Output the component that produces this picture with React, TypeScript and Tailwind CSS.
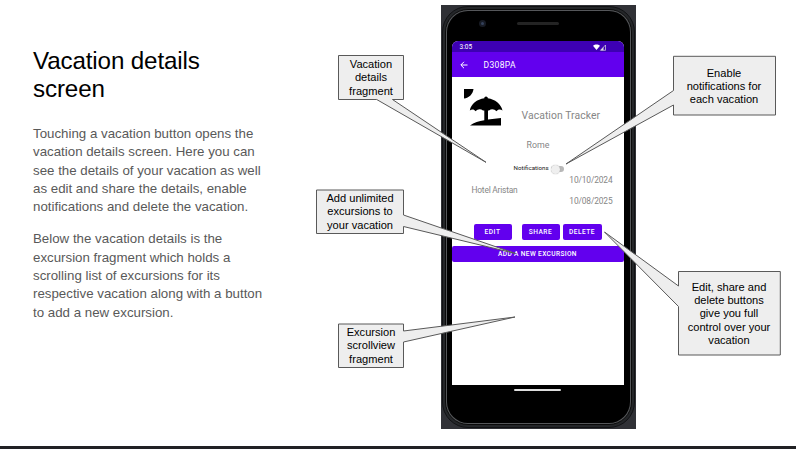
type Callout = { points: string; box: string; lines: string[] };

const callouts: Callout[] = [
  {
    points: "338.5,55.5 403.5,55.5 403.5,99.5 392.5,99.5 486,162.3 376.7,99.5 338.5,99.5",
    box: "left-[338px] top-[56px] w-[66px] h-[44px]",
    lines: ["Vacation", "details", "fragment"],
  },
  {
    points: "316.5,190 403.5,190 403.5,215 515.5,253.5 403.5,226.5 403.5,233.5 316.5,233.5",
    box: "left-[316px] top-[190px] w-[88px] h-[44px]",
    lines: ["Add unlimited", "excursions to", "your vacation"],
  },
  {
    points: "338.5,324 403.5,324 403.5,331 515,317 403.5,342 403.5,367.5 338.5,367.5",
    box: "left-[338px] top-[324px] w-[66px] h-[44px]",
    lines: ["Excursion", "scrollview", "fragment"],
  },
  {
    points: "673.5,56.3 775.5,56.3 775.5,115 673.5,115 673.5,105 566,164 673.5,90.5",
    box: "left-[673px] top-[57px] w-[102px] h-[59px]",
    lines: ["Enable", "notifications for", "each vacation"],
  },
  {
    points: "678.5,271.5 780.3,271.5 780.3,355 678.5,355 678.5,306.5 604.5,232 678.5,286",
    box: "left-[678px] top-[272px] w-[102px] h-[84px]",
    lines: ["Edit, share and", "delete buttons", "give you full", "control over your", "vacation"],
  },
];

function Copy() {
  return (
    <section className="w-[441px] shrink-0 whitespace-nowrap pl-[33px] pt-[47px]">
      <h1 className="text-[24.2px] leading-[28px] tracking-[-0.14px] text-black">
        Vacation details
        <br />
        screen
      </h1>
      <p className="mt-[22px] text-[13.3px] leading-[18.3px] text-[#595959]">
        Touching a vacation button opens the
        <br />
        vacation details screen. Here you can
        <br />
        see the details of your vacation as well
        <br />
        as edit and share the details, enable
        <br />
        notifications and delete the vacation.
      </p>
      <p className="mt-[14px] text-[13.3px] leading-[18.3px] text-[#595959]">
        Below the vacation details is the
        <br />
        excursion fragment which holds a
        <br />
        scrolling list of excursions for its
        <br />
        respective vacation along with a button
        <br />
        to add a new excursion.
      </p>
    </section>
  );
}

function BeachIcon() {
  return (
    <svg className="h-[38px] w-[40px]" viewBox="0 0 40 38">
      <path d="M0 0H9.5C9 5 5 9 0 9.5Z" />
      <path d="M22 7.5C23.2 7.5 23.8 8.3 23.8 9.3C31 10.3 37 15 38.5 21.5C36.5 20 34 20 32.5 22.3C30.5 20 27.5 19.3 25 21.5H24V30.6L37 29V36.5H6C10 33.5 15 32 20.3 31.2V21.5H19C16.5 19.3 13.5 20 11.5 22.3C10 20 8 20 5.8 21.5C7 15 13 10.3 20.3 9.3C20.3 8.3 21 7.5 22 7.5Z" />
    </svg>
  );
}

function StatusBar() {
  return (
    <div className="flex h-[11px] items-center bg-[#3d00b3] pl-[8px] pr-[17px] pt-[2px] text-[6.5px] text-white">
      <span>3:05</span>
      <svg className="ml-auto h-[7px] w-[14px]" viewBox="0 0 14 7">
        <path d="M0 1.8C2-.1 5-.1 7 1.8L3.5 6Z" fill="#fff" />
        <path d="M7.5 6.3L12.5 1V6.3Z" fill="none" stroke="#ddd" strokeWidth=".7" />
        <path d="M7.5 6.3L10.5 3V6.3Z" fill="#ddd" />
      </svg>
    </div>
  );
}

const buttonStyle = "flex h-4 items-center justify-center rounded-[2px] bg-[#6200ee] pt-[2px]";

function Screen() {
  return (
    <div className="mr-[2px] h-[344px] w-[172px] overflow-hidden rounded-t-[6px] bg-white font-['Roboto',sans-serif] text-[#868686]">
      <StatusBar />
      <div className="flex h-[25px] items-center bg-[#6200ee] pl-[8px] text-white">
        <svg className="h-[8px] w-[8px]" viewBox="0 0 8 8" fill="none" stroke="#fff" strokeWidth="1">
          <path d="M7.5 4H1M4 .8L.8 4L4 7.2" />
        </svg>
        <span className="ml-[16px] pt-px text-[8.5px] tracking-[0.35px]">D308PA</span>
      </div>
      <div className="flex h-[51px] pl-[12px] pt-[12px] text-black">
        <BeachIcon />
        <span className="ml-[18px] mt-[18px] whitespace-nowrap text-[10.4px] leading-[18px] tracking-[0.07px] text-[#868686]">Vacation Tracker</span>
      </div>
      <div className="mt-[10px] pl-[75px] text-[8.8px] leading-[14px]">Rome</div>
      <div className="mt-[13px] flex h-[8px] items-center pl-[62px] text-[6.2px] text-[#202020]">
        <span>Notifications</span>
        <span className="ml-[2px] flex h-[6px] w-[13px] items-center rounded-full bg-[#b8b8b8]">
          <span className="h-[9px] w-[9px] shrink-0 rounded-full bg-[#efefef] shadow-[0_0_1px_#999]" />
        </span>
      </div>
      <div className="mt-px flex h-[32px] items-center justify-between pl-[20px] pr-[11px] text-[8.4px]">
        <span className="pt-px tracking-[-0.2px]">Hotel Aristan</span>
        <div className="flex flex-col gap-[9px] text-right leading-[12px] tracking-[-0.14px]">
          <span>10/10/2024</span>
          <span>10/08/2025</span>
        </div>
      </div>
      <div className="mt-[18px] flex pl-[22px] text-[6.6px] font-medium tracking-[0.5px] text-white">
        <div className={`${buttonStyle} w-[38px]`}>EDIT</div>
        <div className={`${buttonStyle} ml-[10px] w-[38px]`}>SHARE</div>
        <div className={`${buttonStyle} ml-[3px] w-[39px]`}>DELETE</div>
      </div>
      <div className={`${buttonStyle} mt-[6px] text-[6.6px] font-medium tracking-[0.35px] text-white`}>ADD A NEW EXCURSION</div>
    </div>
  );
}

function Phone() {
  return (
    <section className="mt-[5px] h-[424px] w-[195px] shrink-0 bg-[#303136] px-px pt-px">
      <div className="h-[422px] rounded-[26px] border border-[#111214] bg-[#242629] p-[2px]">
        <div className="h-full rounded-[23px] border border-[#0a0a0a] bg-[#55575a] p-px">
          <div className="flex h-full flex-col items-center rounded-[21px] bg-black">
            <div className="flex h-[30px] w-full items-start pl-[32px] pt-[9px]">
              <span className="flex h-[7px] w-[7px] items-center justify-center rounded-full bg-[#171b24]">
                <span className="h-[3px] w-[3px] rounded-full bg-[#34415b]" />
              </span>
              <span className="ml-[31px] mt-[2px] h-[3px] w-[42px] rounded-full bg-[#242424]" />
            </div>
            <Screen />
            <div className="mr-[2px] mt-[4px] h-[2px] w-[47px] rounded-full bg-[#dedede]" />
          </div>
        </div>
      </div>
    </section>
  );
}

export default function App() {
  return (
    <main className="relative flex h-[449px] w-[796px] flex-col overflow-hidden bg-white font-['Liberation_Sans',Arial,sans-serif]">
      <div className="flex h-[446px] shrink-0">
        <Copy />
        <Phone />
      </div>
      <div className="h-[3px] bg-[#212124]" />
      <svg className="absolute inset-0" width="796" height="449" viewBox="0 0 796 449">
        {callouts.map((c) => (
          <polygon key={c.points} points={c.points} fill="#eeeeee" stroke="#595959" strokeWidth="1" strokeLinejoin="bevel" />
        ))}
      </svg>
      {callouts.map((c) => (
        <div key={c.points} className={`absolute flex flex-col items-center justify-center whitespace-nowrap text-[11.1px] leading-[13.3px] text-black ${c.box}`}>
          {c.lines.map((line) => (
            <span key={line}>{line}</span>
          ))}
        </div>
      ))}
    </main>
  );
}
